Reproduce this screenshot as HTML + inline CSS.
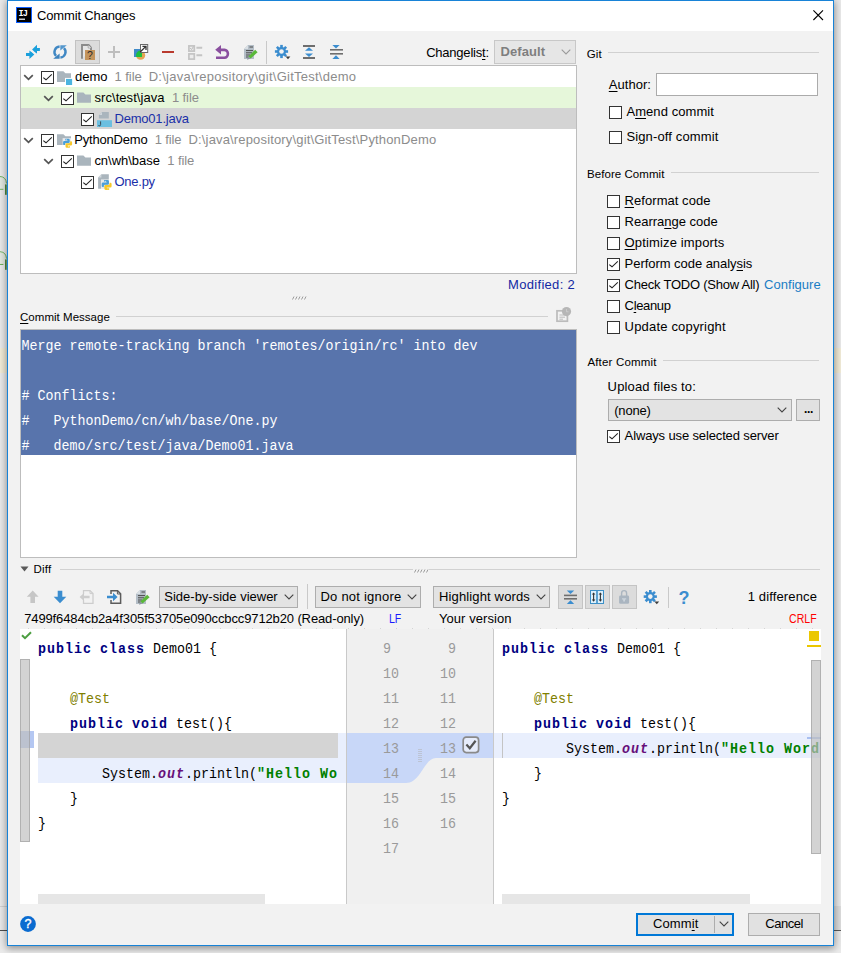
<!DOCTYPE html>
<html>
<head>
<meta charset="utf-8">
<title>Commit Changes</title>
<style>
*{box-sizing:border-box;margin:0;padding:0}
html,body{width:841px;height:953px;overflow:hidden}
body{background:#e9e9e9;font-family:"Liberation Sans",sans-serif;font-size:13px;color:#000;position:relative}
.abs,.win *{position:absolute}
.win{position:absolute;left:7px;top:0;width:827px;height:946px;background:#f2f2f2;border:1px solid #1883d7;box-shadow:0 0 9px 1px rgba(0,0,0,.25),0 3px 6px rgba(0,0,0,.2)}
.t{white-space:nowrap;line-height:16px;height:16px;margin-top:1px}
.t u{position:static;text-decoration:underline;text-underline-offset:2px}
.t span,.code span,.msg span{position:static}
.sep{font-size:11.5px}
.gray{color:#8c8c8c}
.titlebar{left:0;top:0;width:825px;height:30px;background:#fff}
.box{background:#fff;border:1px solid #bdbdbd}
.row{left:0;width:555px;height:21px}
.cb{width:13px;height:13px;background:#fff;border:1px solid #333}
.cb svg{left:0;top:0}
.hr{height:1px;background:#d1d1d1}
.combo{height:23px;background:#e3e3e3;border:1px solid #adadad}
.btn{height:23px;background:#e1e1e1;border:1px solid #adadad;text-align:center}
.mono{font-family:"Liberation Mono",monospace;font-size:13.333px;white-space:pre;transform:scaleY(1.14);transform-origin:0 66%;margin-top:1px}
.msg{left:0;width:555px;height:25px;line-height:25px;color:#fff}
.code{height:25px;line-height:25px;color:#000}
.kw{color:#000080;font-weight:bold;letter-spacing:1px}
.ann{color:#808000}
.str{color:#008000;font-weight:bold;letter-spacing:1px}
.fld{color:#660e7a;font-weight:bold;font-style:italic;letter-spacing:1px}
.ln{color:#9a9a9a;height:25px;line-height:25px;text-align:right;width:40px}
</style>
</head>
<body>
<!-- background fragments of the IDE behind the dialog -->
<div class="abs" style="left:0;top:0;width:841px;height:953px;background:#ebebeb"></div>
<div class="abs" style="left:0;top:348px;width:8px;height:25px;background:#f3edd8"></div>
<div class="abs" style="left:833px;top:348px;width:8px;height:25px;background:#f3edd8"></div>
<div class="abs" style="left:0;top:906px;width:8px;height:1px;background:#d2d2d2"></div>
<div class="abs" style="left:0;top:930px;width:8px;height:1px;background:#4f4f4f"></div>
<div class="abs" style="left:833px;top:906px;width:8px;height:24px;background:#dedede"></div>
<div class="abs" style="left:833px;top:930px;width:8px;height:1px;background:#5c5c5c"></div>
<svg class="abs" style="left:0;top:170px" width="8" height="110" viewBox="0 170 8 110">
  <path d="M0 176.6 Q6 176.8 6.4 183.4" fill="none" stroke="#5fae4d" stroke-width="1"/>
  <path d="M0 189.2 H3.4" fill="none" stroke="#5fae4d" stroke-width="1"/>
  <path d="M0 177 Q5.6 177.4 5.8 183.6 V188.8 H0 Z" fill="#dfe9dc" opacity=".6"/>
  <rect x="5" y="184.4" width="1.7" height="10.4" fill="#4b8a3f"/>
  <path d="M0 251.8 Q6 252 6.4 258.6" fill="none" stroke="#5fae4d" stroke-width="1"/>
  <path d="M0 264.4 H3.4" fill="none" stroke="#5fae4d" stroke-width="1"/>
  <path d="M0 252.2 Q5.6 252.6 5.8 258.8 V264 H0 Z" fill="#dfe9dc" opacity=".6"/>
  <rect x="5" y="259.4" width="1.7" height="10.4" fill="#4b8a3f"/>
</svg>

<div class="win">
  <div id="pg" style="left:-8px;top:-1px;width:841px;height:953px">
  <!-- TITLE BAR (page coordinates from here on) -->
  <div class="titlebar" style="left:8px;top:1px"></div>
  <svg id="ijicon" style="left:16px;top:7px" width="17" height="17" viewBox="0 0 17 17"><rect x="0.5" y="0.5" width="15" height="15" fill="#000" stroke="#0f5fff" stroke-width="1"/><text x="2.6" y="8.8" font-family="Liberation Mono, monospace" font-weight="bold" font-size="8.6" fill="#fff" letter-spacing="-0.9">IJ</text><rect x="3" y="11.6" width="6" height="1.2" fill="#fff"/></svg>
  <div class="t" id="title" style="left:37px;top:7px;letter-spacing:-0.153px">Commit Changes</div>
  <svg id="closex" style="left:813px;top:10px" width="11" height="11" viewBox="0 0 11 11"><path d="M0.4 0.4 L10 10 M10 0.4 L0.4 10" stroke="#000" stroke-width="1.1" fill="none"/></svg>

  <!-- TOOLBAR -->
  <svg id="tbicons" style="left:20px;top:38px" width="330" height="28" viewBox="20 38 330 28">
    <!-- 1 diagonal arrows -->
    <g fill="#1ba0dc">
      <polygon points="32.1,49.5 37,44.8 37,48 39.9,48 39.9,51 37,51 37,54.2"/>
      <polygon points="34.3,54.5 29.4,49.9 29.4,53 26,53 26,56 29.4,56 29.4,59.1"/>
    </g>
    <path d="M28.6 49.4 L37.8 54.8" stroke="#f2f2f2" stroke-width="1.2"/>
    <!-- 2 refresh -->
    <g fill="none" stroke="#4088c4" stroke-width="2.4">
      <path d="M59.6 46.5 A5.5 5.5 0 0 0 56.1 55.9"/>
      <path d="M60.4 57.5 A5.5 5.5 0 0 0 63.9 48.1"/>
    </g>
    <polygon points="53.2,58.7 59.6,58.7 59.6,53.4" fill="#3c82bd"/>
    <polygon points="66.8,45.2 60.3,45.2 60.3,50.5" fill="#5497cd"/>
    <!-- 3 selected: unversioned files -->
    <rect x="75.5" y="40.5" width="24" height="23" fill="#dcdcdc" stroke="#c2c2c2"/>
    <path d="M82 58.8 L82 45 L88.6 45 L91 47.6 L91 50" fill="#e6e6e6" stroke="#8a8a8a" stroke-width="1.9"/>
    <path d="M88.2 45.2 L88.2 48 L91.4 48" fill="#fafafa" stroke="#9a9a9a" stroke-width="0.8"/>
    <rect x="85" y="50" width="10" height="10" fill="#c4945c"/>
    <text x="90" y="58.8" font-family="Liberation Sans, sans-serif" font-size="10.5" text-anchor="middle" fill="#2b2b2b">?</text>
    <!-- 4 plus -->
    <path d="M108 52 H120 M114 46 V58" stroke="#bebebe" stroke-width="2" fill="none"/>
    <!-- 5 move to changelist -->
    <clipPath id="sqclip"><rect x="134" y="49" width="8" height="8"/></clipPath>
    <circle cx="140.6" cy="55.2" r="4.6" fill="#e4a451"/>
    <rect x="134" y="49" width="8" height="8" fill="#3f8ac8"/>
    <circle cx="140.6" cy="55.2" r="4.6" fill="#1fbf3f" clip-path="url(#sqclip)"/>
    <rect x="140.5" y="44.5" width="7.2" height="8" fill="#fff" stroke="#6a6a6a" stroke-width="1"/>
    <path d="M140.2 52 L145.6 46.6 M142.4 46.4 H146 V50" stroke="#333" stroke-width="1.3" fill="none"/>
    <!-- 6 minus -->
    <rect x="162" y="51" width="12" height="2" fill="#b93a2e"/>
    <!-- 7 disabled checklist -->
    <g fill="#ececec" stroke="#c4c4c4" stroke-width="1.7">
      <rect x="188.9" y="45.9" width="5.4" height="5.2"/>
      <rect x="188.9" y="53.9" width="5.4" height="5.2"/>
    </g>
    <path d="M196.4 47.8 H202.2 M196.4 55.2 H202.2" stroke="#c4c4c4" stroke-width="2" fill="none"/>
    <path d="M190.2 48 L191.6 49.6 L193.4 46.6" stroke="#bdbdbd" stroke-width="1" fill="none"/>
    <!-- 8 undo (purple) -->
    <path d="M215.2 49.8 L221 45 L221 48.6 L224.6 48.6 A4.6 5.2 0 0 1 224.6 59 L216 59 L216 56.4 L224.2 56.4 A2.4 2.6 0 0 0 224.2 51.2 L221 51.2 L221 54.6 Z" fill="#8a4f9f"/>
    <!-- 9 document with pencil -->
    <path d="M244 49 L248 45 L254 45 L254 59 L244 59 Z" fill="#b4bec7"/>
    <path d="M244 49 L248 49 L248 45 Z" fill="#d9dfe4"/>
    <path d="M249.5 47 H253 M246 50.6 H253 M246 52.8 H252 M246 55 H250 M246 57 H248.6" stroke="#4a4a4a" stroke-width="1" fill="none"/>
    <path d="M255.2 49.8 L257.6 52.2 L250.6 58.6 L248.2 56.4 Z" fill="#5ab83a"/>
    <path d="M248.2 56.4 L250.6 58.6 L247 59.8 Z" fill="#8c979f"/>
    <!-- separator -->
    <rect x="266" y="41" width="1" height="23" fill="#c9c9c9"/>
    <!-- 11 gear -->
    <g transform="translate(281.5,51.5)">
      <g fill="#3b8dcf">
        <rect x="-1.3" y="-6.6" width="2.6" height="13.2"/>
        <rect x="-1.3" y="-6.6" width="2.6" height="13.2" transform="rotate(45)"/>
        <rect x="-1.3" y="-6.6" width="2.6" height="13.2" transform="rotate(90)"/>
        <rect x="-1.3" y="-6.6" width="2.6" height="13.2" transform="rotate(135)"/>
        <circle r="4.5"/>
      </g>
      <circle r="2.3" fill="#f2f2f2"/>
    </g>
    <polygon points="285.6,56.4 290.4,56.4 288,59.2" fill="#3c3c3c"/>
    <!-- 12 expand all -->
    <rect x="303" y="45" width="12" height="2" fill="#6e6e6e"/>
    <rect x="303" y="57" width="12" height="2" fill="#6e6e6e"/>
    <polygon points="309,47.2 313,50.8 305,50.8" fill="#3b8dcf"/>
    <polygon points="309,57 313,53.4 305,53.4" fill="#3b8dcf"/>
    <!-- 13 collapse all -->
    <rect x="330" y="49" width="13" height="1.6" fill="#6e6e6e"/>
    <rect x="330" y="53" width="13" height="1.6" fill="#6e6e6e"/>
    <polygon points="332.4,45 339.6,45 336,48.6" fill="#3b8dcf"/>
    <polygon points="332.4,59 339.6,59 336,55.2" fill="#3b8dcf"/>
  </svg>
  <div class="t" id="cl-label" style="left:426.2px;top:44px;letter-spacing:-0.225px">Changelis<u>t</u>:</div>
  <div class="combo" id="cl-combo" style="left:494px;top:40px;width:82px;height:24px;background:#e6e6e6;border-color:#c8c8c8"></div>
  <div class="t" id="cl-val" style="left:500.5px;top:43px;color:#7f7f7f;font-weight:bold;letter-spacing:0.091px">Default</div>
  <svg style="left:561px;top:49px" width="10" height="6" viewBox="0 0 10 6"><path d="M0.7 0.7 L5 5 L9.3 0.7" stroke="#9a9a9a" stroke-width="1.1" fill="none"/></svg>
  <!-- TREE -->
  <div class="box" id="tree" style="left:20px;top:65px;width:557px;height:209px">
    <div class="row" style="top:21px;background:#e6f7da"></div>
    <div class="row" style="top:42px;background:#d4d4d4"></div>
  </div>
  <div style="left:23px;top:74px;width:11px;height:7px"><svg width="11" height="7" viewBox="0 0 11 7"><path d="M1.2 1.2 L5.5 5.4 L9.8 1.2" stroke="#555" stroke-width="1.7" fill="none"/></svg></div>
  <div class="cb" style="left:41px;top:71px"><svg width="11" height="11" viewBox="0 0 11 11"><path d="M1.3 5.6 L4 7.8 L9.8 2.4" stroke="#222" stroke-width="1.1" fill="none"/></svg></div>
  <svg style="left:57px;top:69px" width="16" height="16" viewBox="0 0 16 16"><g transform="translate(0,2)"><path d="M0 0.2 H6.4 L8.4 2.2 H14 V11 H0 Z" fill="#aab5bd"/></g><rect x="8" y="8.9" width="8" height="8" fill="#fff"/><rect x="9" y="9.9" width="6.1" height="6.1" fill="#4bb4e0"/></svg>
  <div class="t" id="tr0" style="left:75px;top:68px;letter-spacing:-0.008px">demo</div>
  <div class="t gray" id="tr0e0" style="left:114.5px;top:68px;letter-spacing:-0.028px">1 file</div>
  <div class="t gray" id="tr0e1" style="left:148.7px;top:68px;letter-spacing:0.254px">D:\java\repository\git\GitTest\demo</div>
  <div style="left:43px;top:95px;width:11px;height:7px"><svg width="11" height="7" viewBox="0 0 11 7"><path d="M1.2 1.2 L5.5 5.4 L9.8 1.2" stroke="#555" stroke-width="1.7" fill="none"/></svg></div>
  <div class="cb" style="left:61px;top:92px"><svg width="11" height="11" viewBox="0 0 11 11"><path d="M1.3 5.6 L4 7.8 L9.8 2.4" stroke="#222" stroke-width="1.1" fill="none"/></svg></div>
  <svg style="left:77px;top:90px" width="16" height="16" viewBox="0 0 16 16"><g transform="translate(0,2.2)"><path d="M0 0.2 H6.4 L8.4 2.2 H14 V10.5 H0 Z" fill="#aab5bd"/></g></svg>
  <div class="t" id="tr1" style="left:94.5px;top:89px;letter-spacing:0.057px">src\test\java</div>
  <div class="t gray" id="tr1e0" style="left:172px;top:89px;letter-spacing:-0.111px">1 file</div>
  <div class="cb" style="left:81px;top:113px"><svg width="11" height="11" viewBox="0 0 11 11"><path d="M1.3 5.6 L4 7.8 L9.8 2.4" stroke="#222" stroke-width="1.1" fill="none"/></svg></div>
  <svg style="left:97px;top:111px" width="16" height="17" viewBox="0 0 16 17"><path d="M5 1 H11.8 V7.6 H1.9 V4.1 Z" fill="#aab5bd"/><path d="M1.9 4.1 L5 1 V4.1 Z" fill="#cfd6db"/><rect x="0" y="9.2" width="15" height="6.8" fill="#6bbfe0"/><path d="M3.6 10.4 V13.6 Q3.6 14.8 2.5 14.8 Q1.6 14.8 1.4 14" fill="none" stroke="#3c4a55" stroke-width="1"/></svg>
  <div class="t" id="tr2" style="left:114.5px;top:110px;color:#1a2fa8;letter-spacing:-0.210px">Demo01.java</div>
  <div style="left:23px;top:137px;width:11px;height:7px"><svg width="11" height="7" viewBox="0 0 11 7"><path d="M1.2 1.2 L5.5 5.4 L9.8 1.2" stroke="#555" stroke-width="1.7" fill="none"/></svg></div>
  <div class="cb" style="left:41px;top:134px"><svg width="11" height="11" viewBox="0 0 11 11"><path d="M1.3 5.6 L4 7.8 L9.8 2.4" stroke="#222" stroke-width="1.1" fill="none"/></svg></div>
  <svg style="left:57px;top:132px" width="16" height="17" viewBox="0 0 16 17"><g transform="translate(0,2)"><path d="M0 0.2 H6.4 L8.4 2.2 H14 V11 H0 Z" fill="#aab5bd"/></g><rect x="5.6" y="6.2" width="10" height="10.4" fill="#fff" opacity=".75"/><g transform="translate(6.1,6.7) scale(1.0)"><path d="M2.2 0 H5.4 Q6.6 0 6.6 1.2 V3.4 Q6.6 4.4 5.4 4.4 H3 Q1.9 4.4 1.9 5.5 V6.4 H1 Q0 6.4 0 5.2 V3.4 Q0 2.2 1.2 2.2 H4.4 V1.7 H2.2 Z" fill="#4a9fd8"/><path d="M6.8 9 H3.6 Q2.4 9 2.4 7.8 V5.6 Q2.4 4.6 3.6 4.6 H6 Q7.1 4.6 7.1 3.5 V2.6 H8 Q9 2.6 9 3.8 V5.6 Q9 6.8 7.8 6.8 H4.6 V7.3 H6.8 Z" fill="#f7c82a"/><circle cx="3.3" cy="1.1" r="0.5" fill="#e8f3fb"/><circle cx="5.7" cy="7.9" r="0.5" fill="#fff6d0"/></g></svg>
  <div class="t" id="tr3" style="left:74.3px;top:131px;letter-spacing:-0.196px">PythonDemo</div>
  <div class="t gray" id="tr3e0" style="left:154.8px;top:131px;letter-spacing:-0.178px">1 file</div>
  <div class="t gray" id="tr3e1" style="left:188.5px;top:131px;letter-spacing:0.158px">D:\java\repository\git\GitTest\PythonDemo</div>
  <div style="left:43px;top:158px;width:11px;height:7px"><svg width="11" height="7" viewBox="0 0 11 7"><path d="M1.2 1.2 L5.5 5.4 L9.8 1.2" stroke="#555" stroke-width="1.7" fill="none"/></svg></div>
  <div class="cb" style="left:61px;top:155px"><svg width="11" height="11" viewBox="0 0 11 11"><path d="M1.3 5.6 L4 7.8 L9.8 2.4" stroke="#222" stroke-width="1.1" fill="none"/></svg></div>
  <svg style="left:77px;top:153px" width="16" height="16" viewBox="0 0 16 16"><g transform="translate(0,2.2)"><path d="M0 0.2 H6.4 L8.4 2.2 H14 V10.5 H0 Z" fill="#aab5bd"/></g></svg>
  <div class="t" id="tr4" style="left:94.4px;top:152px;letter-spacing:-0.027px">cn\wh\base</div>
  <div class="t gray" id="tr4e0" style="left:167.3px;top:152px;letter-spacing:-0.095px">1 file</div>
  <div class="cb" style="left:81px;top:176px"><svg width="11" height="11" viewBox="0 0 11 11"><path d="M1.3 5.6 L4 7.8 L9.8 2.4" stroke="#222" stroke-width="1.1" fill="none"/></svg></div>
  <svg style="left:97px;top:174px" width="16" height="17" viewBox="0 0 16 17"><path d="M4.4 0.3 H11.8 V14.7 H1.1 V3.6 Z" fill="#aab5bd"/><path d="M1.1 3.6 L4.4 0.3 V3.6 Z" fill="#d3d9de"/><rect x="4" y="5.4" width="11.4" height="11" fill="#fff" opacity=".7"/><g transform="translate(4.7,6.0) scale(1.1)"><path d="M2.2 0 H5.4 Q6.6 0 6.6 1.2 V3.4 Q6.6 4.4 5.4 4.4 H3 Q1.9 4.4 1.9 5.5 V6.4 H1 Q0 6.4 0 5.2 V3.4 Q0 2.2 1.2 2.2 H4.4 V1.7 H2.2 Z" fill="#4a9fd8"/><path d="M6.8 9 H3.6 Q2.4 9 2.4 7.8 V5.6 Q2.4 4.6 3.6 4.6 H6 Q7.1 4.6 7.1 3.5 V2.6 H8 Q9 2.6 9 3.8 V5.6 Q9 6.8 7.8 6.8 H4.6 V7.3 H6.8 Z" fill="#f7c82a"/><circle cx="3.3" cy="1.1" r="0.5" fill="#e8f3fb"/><circle cx="5.7" cy="7.9" r="0.5" fill="#fff6d0"/></g></svg>
  <div class="t" id="tr5" style="left:114.4px;top:173px;color:#1a2fa8;letter-spacing:-0.237px">One.py</div>
  <div class="t" id="modified" style="left:480px;top:276px;width:95px;text-align:right;color:#1229a3;letter-spacing:0.301px">Modified: 2</div>
  <!-- MESSAGE -->
  <svg style="left:290px;top:295px" width="18" height="6" viewBox="0 0 18 6"><path d="M2.5 4.5 l1.5 -3 M5.5 4.5 l1.5 -3 M8.5 4.5 l1.5 -3 M11.5 4.5 l1.5 -3 M14.5 4.5 l1.5 -3" stroke="#9c9c9c" stroke-width="1" fill="none"/></svg>
  <div class="t sep" id="cm-label" style="left:20px;top:308px;letter-spacing:0.030px"><u>C</u>ommit Message</div>
  <div class="hr" style="left:116px;top:316px;width:432px"></div>
  <svg id="histicon" style="left:555px;top:306px" width="18" height="18" viewBox="555 306 18 18">
    <rect x="557" y="310.8" width="10.4" height="10.4" fill="none" stroke="#bcbcbc" stroke-width="1.7"/>
    <path d="M559.4 315 H565 M559.4 317.2 H565 M559.4 319.2 H563" stroke="#bcbcbc" stroke-width="1"/>
    <circle cx="566.5" cy="311.6" r="4.6" fill="#b6b6b6"/>
    <path d="M566.5 309 V311.8 H568.6" stroke="#cfcfcf" stroke-width="0.8" fill="none"/>
  </svg>
  <div class="box" id="msgbox" style="left:20px;top:329px;width:557px;height:229px">
    <div style="left:0;top:0;width:555px;height:125px;background:#5874ac"></div>
    <div class="msg mono" style="margin-left:-0.5px;top:3px;left:1px">Merge remote-tracking branch 'remotes/origin/rc' into dev</div>
    <div class="msg mono" style="margin-left:-0.5px;top:53px;left:1px"># Conflicts:</div>
    <div class="msg mono" style="margin-left:-0.5px;top:78px;left:1px">#   PythonDemo/cn/wh/base/One.py</div>
    <div class="msg mono" style="margin-left:-0.5px;top:103px;left:1px">#   demo/src/test/java/Demo01.java</div>
  </div>
  <!-- RIGHT PANEL -->
  <div class="t sep" id="s-git" style="left:586.8px;top:45px;letter-spacing:0.066px">Git</div>
  <div class="hr" style="left:608px;top:52px;width:211px"></div>
  <div class="t" id="r-author" style="left:608.8px;top:76px;letter-spacing:0.040px"><u>A</u>uthor:</div>
  <div class="box" style="left:656px;top:73px;width:162px;height:23px;border-color:#ababab"></div>
  <div class="cb" style="left:609px;top:106px"></div>
  <div class="t" id="r-amend" style="left:626.4px;top:103px;letter-spacing:0.073px">A<u>m</u>end commit</div>
  <div class="cb" style="left:609px;top:131px"></div>
  <div class="t" id="r-sign" style="left:626.4px;top:128px;letter-spacing:0.141px">Si<u>g</u>n-off commit</div>
  <div class="t sep" id="s-before" style="left:587px;top:165px;letter-spacing:0.055px">Before Commit</div>
  <div class="hr" style="left:671px;top:172px;width:148px"></div>
  <div class="cb" style="left:607px;top:195px"></div>
  <div class="t" id="r-ref" style="left:624.6px;top:192px;letter-spacing:0.049px"><u>R</u>eformat code</div>
  <div class="cb" style="left:607px;top:216px"></div>
  <div class="t" id="r-rea" style="left:624.6px;top:213px;letter-spacing:-0.018px">Rearra<u>n</u>ge code</div>
  <div class="cb" style="left:607px;top:237px"></div>
  <div class="t" id="r-opt" style="left:624.6px;top:234px;letter-spacing:0.141px"><u>O</u>ptimize imports</div>
  <div class="cb" style="left:607px;top:258px"><svg width="11" height="11" viewBox="0 0 11 11"><path d="M1.3 5.6 L4 7.8 L9.8 2.4" stroke="#222" stroke-width="1.1" fill="none"/></svg></div>
  <div class="t" id="r-per" style="left:624.6px;top:255px;letter-spacing:-0.044px">Perform code analy<u>s</u>is</div>
  <div class="cb" style="left:607px;top:279px"><svg width="11" height="11" viewBox="0 0 11 11"><path d="M1.3 5.6 L4 7.8 L9.8 2.4" stroke="#222" stroke-width="1.1" fill="none"/></svg></div>
  <div class="t" id="r-chk" style="left:624.6px;top:276px;letter-spacing:-0.233px">Check TODO (Show All)</div>
  <div class="cb" style="left:607px;top:300px"></div>
  <div class="t" id="r-cle" style="left:624.6px;top:297px;letter-spacing:-0.348px">C<u>l</u>eanup</div>
  <div class="cb" style="left:607px;top:321px"></div>
  <div class="t" id="r-upd" style="left:624.6px;top:318px;letter-spacing:0.182px">Update copyright</div>
  <div class="t" id="r-conf" style="left:764.1px;top:276px;color:#1a7dc4;letter-spacing:0.025px">Configure</div>
  <div class="t sep" id="s-after" style="left:587.4px;top:353px;letter-spacing:0.184px">After Commit</div>
  <div class="hr" style="left:663px;top:360px;width:156px"></div>
  <div class="t" id="r-upl" style="left:607.6px;top:378px;letter-spacing:0.150px">Upload files to:</div>
  <div class="combo" style="left:608px;top:399px;width:184px;height:22px"></div>
  <div class="t" id="r-none" style="left:614.2px;top:402px;letter-spacing:-0.180px">(none)</div>
  <svg style="left:777px;top:407px" width="10" height="6" viewBox="0 0 10 6"><path d="M0.7 0.7 L5 5 L9.3 0.7" stroke="#444" stroke-width="1.1" fill="none"/></svg>
  <div class="btn" style="left:796px;top:399px;width:24px;height:22px"></div>
  <div class="t" id="r-dots" style="left:804px;top:400px;font-weight:bold;font-size:12px;letter-spacing:-0.3px">...</div>
  <div class="cb" style="left:607px;top:430px"><svg width="11" height="11" viewBox="0 0 11 11"><path d="M1.3 5.6 L4 7.8 L9.8 2.4" stroke="#222" stroke-width="1.1" fill="none"/></svg></div>
  <div class="t" id="r-alw" style="left:624.6px;top:427px;letter-spacing:-0.135px">Always use selected server</div>
  <!-- DIFF -->
  <svg style="left:412px;top:568px;z-index:2" width="18" height="6" viewBox="0 0 18 6"><rect x="1" y="0" width="16" height="6" fill="#f2f2f2"/><path d="M2.5 4.5 l1.5 -3 M5.5 4.5 l1.5 -3 M8.5 4.5 l1.5 -3 M11.5 4.5 l1.5 -3 M14.5 4.5 l1.5 -3" stroke="#9c9c9c" stroke-width="1" fill="none"/></svg>
  <svg style="left:20px;top:566px" width="9" height="6" viewBox="0 0 9 6"><polygon points="0.5,0.5 8.5,0.5 4.5,5.5" fill="#5a5a5a"/></svg>
  <div class="t sep" id="diff-label" style="left:33.5px;top:560px;letter-spacing:0.238px">Diff</div>
  <div class="hr" style="left:60px;top:569px;width:760px"></div>
  <svg id="dtb1" style="left:20px;top:584px" width="136" height="26" viewBox="20 584 136 26">
    <!-- prev (disabled) -->
    <polygon points="32.7,590.6 38.6,596.8 35,596.8 35,603 30.4,603 30.4,596.8 26.8,596.8" fill="#c6c6c6"/>
    <!-- next -->
    <polygon points="60,603.2 66.3,596.8 62.3,596.8 62.3,590.8 57.7,590.8 57.7,596.8 53.7,596.8" fill="#3b8dcf"/>
    <!-- jump to source (disabled) -->
    <path d="M83.5 594 V590.6 H90 L93 593.6 V603.4 H83.5 V600" fill="none" stroke="#cdcdcd" stroke-width="1.3"/>
    <path d="M90 590.6 V593.6 H93" fill="none" stroke="#cdcdcd" stroke-width="1"/>
    <polygon points="79.6,597 84,593 84,595.8 89.6,595.8 89.6,598.2 84,598.2 84,601" fill="#cdcdcd"/>
    <!-- jump to (enabled) -->
    <path d="M111 594 V590.8 H117.6 L120.6 593.8 V603.2 H111 V600" fill="none" stroke="#5c5c5c" stroke-width="1.5"/>
    <path d="M117.4 590.8 V594 H120.6" fill="none" stroke="#5c5c5c" stroke-width="1"/>
    <polygon points="117.6,597 113,592.8 113,595.8 107,595.8 107,598.2 113,598.2 113,601.2" fill="#3b8dcf"/>
    <!-- doc with pencil -->
    <g transform="translate(-108,545)">
      <path d="M244 49 L248 45 L254 45 L254 59 L244 59 Z" fill="#b4bec7"/>
      <path d="M244 49 L248 49 L248 45 Z" fill="#d9dfe4"/>
      <path d="M249.5 47 H253 M246 50.6 H253 M246 52.8 H252 M246 55 H250 M246 57 H248.6" stroke="#4a4a4a" stroke-width="1" fill="none"/>
      <path d="M255.2 49.8 L257.6 52.2 L250.6 58.6 L248.2 56.4 Z" fill="#5ab83a"/>
      <path d="M248.2 56.4 L250.6 58.6 L247 59.8 Z" fill="#8c979f"/>
    </g>
  </svg>
  <div class="combo" style="left:159px;top:586px;width:139px;height:22px"></div>
  <div class="t" id="c1" style="left:164.3px;top:588px;letter-spacing:-0.002px">Side-by-side viewer</div>
  <svg style="left:284px;top:594px" width="10" height="6" viewBox="0 0 10 6"><path d="M0.7 0.7 L5 5 L9.3 0.7" stroke="#444" stroke-width="1.1" fill="none"/></svg>
  <div style="left:307px;top:584px;width:1px;height:25px;background:#c9c9c9"></div>
  <div class="combo" style="left:315px;top:586px;width:106px;height:22px"></div>
  <div class="t" id="c2" style="left:320.5px;top:588px;letter-spacing:0.226px">Do not ignore</div>
  <svg style="left:407px;top:594px" width="10" height="6" viewBox="0 0 10 6"><path d="M0.7 0.7 L5 5 L9.3 0.7" stroke="#444" stroke-width="1.1" fill="none"/></svg>
  <div class="combo" style="left:433px;top:586px;width:117px;height:22px"></div>
  <div class="t" id="c3" style="left:439px;top:588px;letter-spacing:0.142px">Highlight words</div>
  <svg style="left:536px;top:594px" width="10" height="6" viewBox="0 0 10 6"><path d="M0.7 0.7 L5 5 L9.3 0.7" stroke="#444" stroke-width="1.1" fill="none"/></svg>
  <svg id="dtb2" style="left:556px;top:584px" width="140" height="26" viewBox="556 584 140 26">
    <rect x="558.5" y="585.5" width="24" height="23" fill="#dcdcdc" stroke="#c4c4c4"/>
    <rect x="585.5" y="585.5" width="24" height="23" fill="#dcdcdc" stroke="#c4c4c4"/>
    <rect x="612.5" y="585.5" width="24" height="23" fill="#dcdcdc" stroke="#c4c4c4"/>
    <!-- collapse unchanged -->
    <rect x="564" y="594.6" width="13" height="1.6" fill="#6e6e6e"/>
    <rect x="564" y="598" width="13" height="1.6" fill="#6e6e6e"/>
    <polygon points="566.8,590.4 574.2,590.4 570.5,594" fill="#3b8dcf"/>
    <polygon points="566.8,604 574.2,604 570.5,600.2" fill="#3b8dcf"/>
    <!-- sync scroll -->
    <rect x="590" y="590" width="14" height="14" fill="#3d8fc6"/>
    <rect x="591" y="591" width="5.2" height="12" fill="#dcf0fc"/>
    <rect x="597.8" y="591" width="5.2" height="12" fill="#dcf0fc"/>
    <path d="M593.6 594 V600 M600.4 594 V600" stroke="#333" stroke-width="1.1"/>
    <path d="M591.8 594.6 L593.6 592.4 L595.4 594.6 Z M591.8 599.6 L593.6 601.8 L595.4 599.6 Z M598.6 594.6 L600.4 592.4 L602.2 594.6 Z M598.6 599.6 L600.4 601.8 L602.2 599.6 Z" fill="#333"/>
    <!-- lock (disabled) -->
    <rect x="619.1" y="595.6" width="10" height="8.2" rx="1.4" fill="#aab5c0"/>
    <path d="M621.6 596 V593.2 A2.5 2.6 0 0 1 626.6 593.2 V596" fill="none" stroke="#aab5c0" stroke-width="1.4"/>
    <path d="M622 598.2 H626.2 V599.4 H625 V601.6 H623.2 V599.4 H622 Z" fill="#ccd4db"/>
    <!-- gear -->
    <g transform="translate(650.3,596.6)">
      <g fill="#3b8dcf">
        <rect x="-1.3" y="-6.6" width="2.6" height="13.2"/>
        <rect x="-1.3" y="-6.6" width="2.6" height="13.2" transform="rotate(45)"/>
        <rect x="-1.3" y="-6.6" width="2.6" height="13.2" transform="rotate(90)"/>
        <rect x="-1.3" y="-6.6" width="2.6" height="13.2" transform="rotate(135)"/>
        <circle r="4.5"/>
      </g>
      <circle r="2.3" fill="#f2f2f2"/>
    </g>
    <polygon points="654.4,601.4 659.2,601.4 656.8,604.2" fill="#3c3c3c"/>
    <rect x="668" y="587" width="1" height="21" fill="#c9c9c9"/>
    <text x="684" y="603.6" font-family="Liberation Sans, sans-serif" font-size="18" font-weight="bold" text-anchor="middle" fill="#3b8dcf">?</text>
  </svg>
  <div class="t" id="ndiff" style="left:700px;top:588px;width:117px;text-align:right;letter-spacing:0.133px">1 difference</div>
  <div class="t" id="hash" style="left:24.2px;top:610px;letter-spacing:-0.124px">7499f6484cb2a4f305f53705e090ccbcc9712b20 (Read-only)</div>
  <div class="t" id="lf" style="font-size:12px;left:388.7px;top:610px;color:#1a1aff;transform:scaleX(.88);transform-origin:0 0">LF</div>
  <div class="t" id="yourv" style="left:439px;top:610px;letter-spacing:0.059px">Your version</div>
  <div class="t" id="crlf" style="font-size:12px;left:789.2px;top:610px;color:#f00;transform:scaleX(.88);transform-origin:0 0">CRLF</div>
  <!-- editors -->
  <div style="left:20px;top:628px;width:801px;height:1px;background:repeating-linear-gradient(to right,transparent 0,transparent 8px,#d4d4d4 8px,#d4d4d4 9px,transparent 9px,transparent 16px)"></div>
  <div id="edl" style="left:20px;top:629px;width:327px;height:275px;background:#fff;overflow:hidden">
        <div style="left:0;top:102px;width:14px;height:17px;background:#b4c7f2"></div>
    <div style="left:0;top:30px;width:10px;height:183px;background:rgba(191,191,191,.69);border:1px solid rgba(150,150,150,.55)"></div>
    <div style="left:18px;top:104px;width:309px;height:25px;background:#e9effd"></div>
    <div style="left:18px;top:104px;width:300px;height:25px;background:#d4d4d4"></div>
    <div style="left:18px;top:129px;width:309px;height:25px;background:#e9effd"></div>
    <svg style="left:1px;top:2px" width="11" height="9" viewBox="0 0 11 9"><path d="M1 4.2 L4 7.2 L10 1.2" stroke="#4c9e41" stroke-width="2" fill="none"/></svg>
    <div id="codel" style="left:18px;top:0;width:300px;height:275px;overflow:hidden">
      <div class="code mono" style="left:0;top:7px"><span class="kw">public</span> <span class="kw">class</span> Demo01 {</div>
      <div class="code mono" style="left:0;top:57px">    <span class="ann">@Test</span></div>
      <div class="code mono" style="left:0;top:82px">    <span class="kw">public</span> <span class="kw">void</span> test(){</div>
      <div class="code mono" style="left:0;top:132px">        System.<span class="fld">out</span>.println(<span class="str">"Hello Wo</span></div>
      <div class="code mono" style="left:0;top:157px">    }</div>
      <div class="code mono" style="left:0;top:182px">}</div>
    </div>
    <div style="left:18px;top:265px;width:227px;height:10px;background:#e6e6e6"></div>
  </div>
  <div id="gut" style="left:346px;top:629px;width:148px;height:275px;background:#f0f0f0;border-left:1px solid #c9c9c9;border-right:1px solid #c9c9c9;overflow:hidden">
    <svg style="left:0;top:0" width="146" height="275" viewBox="347 629 146 275"><path d="M347 733 H493 V758 H436 C424 758 421 783 406 783 H347 Z" fill="#c8d7f8"/></svg>
    <div class="ln mono" style="left:36px;top:7px;text-align:left">9</div>
    <div class="ln mono" style="left:36px;top:32px;text-align:left">10</div>
    <div class="ln mono" style="left:36px;top:57px;text-align:left">11</div>
    <div class="ln mono" style="left:36px;top:82px;text-align:left">12</div>
    <div class="ln mono" style="left:36px;top:107px;text-align:left">13</div>
    <div class="ln mono" style="left:36px;top:132px;text-align:left">14</div>
    <div class="ln mono" style="left:36px;top:157px;text-align:left">15</div>
    <div class="ln mono" style="left:36px;top:182px;text-align:left">16</div>
    <div class="ln mono" style="left:36px;top:207px;text-align:left">17</div>
    <div class="ln mono" style="left:69px;top:7px">9</div>
    <div class="ln mono" style="left:69px;top:32px">10</div>
    <div class="ln mono" style="left:69px;top:57px">11</div>
    <div class="ln mono" style="left:69px;top:82px">12</div>
    <div class="ln mono" style="left:69px;top:107px">13</div>
    <div class="ln mono" style="left:69px;top:132px">14</div>
    <div class="ln mono" style="left:69px;top:157px">15</div>
    <div class="ln mono" style="left:69px;top:182px">16</div>
    <svg style="left:71px;top:119px" width="5" height="16" viewBox="0 0 5 16"><path d="M1 1 V15 M3 1 V15" stroke="#b0b0b0" stroke-width="1" stroke-dasharray="1 1"/></svg>
    <svg style="left:115px;top:107px" width="18" height="18" viewBox="0 0 18 18"><rect x="1.2" y="1.2" width="15.4" height="15.4" rx="3" fill="#e6ecfb" stroke="#8a8a8a" stroke-width="1.7"/><path d="M4.4 8.6 L7.8 12.2 L13.6 4.8" stroke="#555" stroke-width="2.2" fill="none"/></svg>
  </div>
  <div id="edr" style="left:494px;top:629px;width:327px;height:275px;background:#fff;overflow:hidden">
    <div style="left:0;top:104px;width:327px;height:25px;background:#e9effd"></div>
    <div style="left:8px;top:104px;width:1px;height:25px;background:#c4c4c4"></div>
    <div id="coder" style="left:8px;top:0;width:319px;height:275px;overflow:hidden">
      <div class="code mono" style="left:0;top:7px"><span class="kw">public</span> <span class="kw">class</span> Demo01 {</div>
      <div class="code mono" style="left:0;top:57px">    <span class="ann">@Test</span></div>
      <div class="code mono" style="left:0;top:82px">    <span class="kw">public</span> <span class="kw">void</span> test(){</div>
      <div class="code mono" style="left:0;top:107px">        System.<span class="fld">out</span>.println(<span class="str">"Hello Word</span></div>
      <div class="code mono" style="left:0;top:132px">    }</div>
      <div class="code mono" style="left:0;top:157px">}</div>
    </div>
    <div style="left:315px;top:2px;width:10px;height:10px;background:#ebc700"></div>
    <div style="left:313px;top:16px;width:14px;height:2px;background:#ebc700"></div>
    <div style="left:313px;top:108px;width:14px;height:2px;background:#a9bff0"></div>
    <div style="left:317px;top:31px;width:10px;height:194px;background:rgba(191,191,191,.69);border:1px solid rgba(150,150,150,.55)"></div>
    <div style="left:8px;top:265px;width:248px;height:10px;background:#e6e6e6"></div>
  </div>
  <!-- BOTTOM -->
  <svg style="left:19px;top:915px" width="18" height="18" viewBox="0 0 18 18"><circle cx="9" cy="9" r="7.9" fill="#0a6bd0"/><text x="9" y="13.4" font-family="Liberation Sans, sans-serif" font-size="12.5" text-anchor="middle" fill="#fff" stroke="#fff" stroke-width="0.35">?</text></svg>
  <div class="btn" id="commitbtn" style="left:636px;top:913px;width:98px;height:23px;border:2px solid #0078d7"></div>
  <div style="left:714px;top:916px;width:1px;height:17px;background:#adadad"></div>
  <div class="t" id="commit-t" style="left:653px;top:915px;letter-spacing:0.101px">Comm<u>i</u>t</div>
  <svg style="left:719px;top:921px" width="10" height="6" viewBox="0 0 10 6"><path d="M0.7 0.7 L5 5 L9.3 0.7" stroke="#444" stroke-width="1.1" fill="none"/></svg>
  <div class="btn" id="cancelbtn" style="left:748px;top:913px;width:72px;height:23px"></div>
  <div class="t" id="cancel-t" style="left:765.3px;top:915px;letter-spacing:-0.495px">Cancel</div>
  </div>
</div>
</body>
</html>
